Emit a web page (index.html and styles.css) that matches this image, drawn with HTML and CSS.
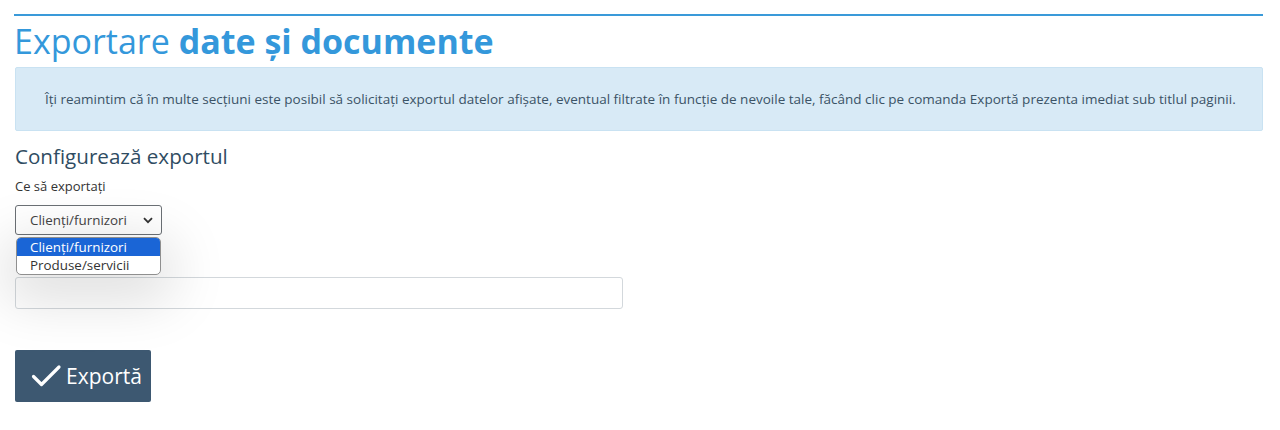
FILE: index.html
```html
<!DOCTYPE html>
<html lang="ro">
<head>
    <meta charset="UTF-8">
    <meta name="viewport" content="width=device-width, initial-scale=1.0">
    <title>Exportare date și documente</title>
    <link rel="stylesheet" href="styles.css">
</head>
<body>
    <main class="page">
        <h1 class="page-title">Exportare <strong>date și documente</strong></h1>

        <div class="info-box">
            Îți reamintim că în multe secțiuni este posibil să solicitați exportul datelor afișate, eventual filtrate în funcție de nevoile tale, făcând clic pe comanda Exportă prezenta imediat sub titlul paginii.
        </div>

        <section class="export-config">
            <h2>Configurează exportul</h2>
            <form id="exportForm">
                <div class="form-group">
                    <label for="exportType">Ce să exportați</label>
                    <div class="select-wrap">
                        <div class="select-box" id="exportType">
                            <span>Clienți/furnizori</span>
                            <svg class="chevron" width="10" height="7" viewBox="0 0 10 7">
                                <path d="M1 1.2 L5 5.2 L9 1.2" fill="none" stroke="#333" stroke-width="1.8"/>
                            </svg>
                        </div>
                        <ul class="select-options">
                            <li class="selected">Clienți/furnizori</li>
                            <li>Produse/servicii</li>
                        </ul>
                    </div>
                </div>
                <div class="form-group spaced">
                    <input type="text" class="text-input" name="exportDetails">
                </div>
                <button type="submit" class="btn-export">
                    <svg width="31" height="24" viewBox="0 0 31 24">
                        <path d="M2.5 12.5 L10.5 20.5 L28 3" fill="none" stroke="#fff" stroke-width="3.2" stroke-linecap="round" stroke-linejoin="round"/>
                    </svg>
                    Exportă
                </button>
            </form>
        </section>
    </main>
</body>
</html>
```

FILE: styles.css
```css
body {
    font-family: "Open Sans", "Noto Sans", sans-serif;
    margin: 0;
    padding: 0;
    background-color: #fff;
    color: #333;
}

.page {
    width: 1249px;
    margin: 0 0 0 14px;
    padding-top: 14px;
}

.page-title {
    border-top: 2px solid #3a9ad9;
    margin: 0;
    padding-top: 2px;
    font-size: 34px;
    font-weight: 400;
    line-height: 46px;
    color: #3498db;
}

.page-title strong {
    font-weight: 700;
}

.info-box {
    margin: 3px 0 0 1px;
    padding: 23px 26px 23px 29px;
    background-color: #d8eaf6;
    border: 1px solid #c9e2f2;
    border-radius: 2px;
    font-size: 13.5px;
    line-height: 16px;
    color: #3b5366;
}

.export-config {
    padding-left: 1px;
}

.export-config h2 {
    margin: 12px 0 0;
    font-size: 20.6px;
    font-weight: 400;
    line-height: 26px;
    color: #2f4c62;
}

.form-group label {
    display: block;
    font-size: 13px;
    line-height: 18px;
    margin-top: 8px;
    color: #333;
}

.select-wrap {
    position: relative;
    margin-top: 10px;
    width: 147px;
}

.select-box {
    display: flex;
    align-items: center;
    justify-content: space-between;
    height: 30px;
    box-sizing: border-box;
    padding: 0 8px 0 14px;
    border: 1px solid #6b7075;
    border-radius: 3px;
    font-size: 13.4px;
    color: #444;
}

.select-options {
    position: absolute;
    top: 32px;
    left: 1px;
    width: 145px;
    box-sizing: border-box;
    margin: 0;
    padding: 0;
    list-style: none;
    background: #fff;
    border: 1px solid #8f8f8f;
    border-radius: 5px;
    overflow: hidden;
    box-shadow: 0 14px 55px 12px rgba(0, 0, 0, 0.13);
    font-size: 13.4px;
    line-height: 18px;
    z-index: 2;
}

.select-options li {
    padding: 0 13px;
    color: #333;
}

.select-options li.selected {
    background: #1a65d6;
    color: #fff;
}

.spaced {
    margin-top: 42px;
}

.text-input {
    display: block;
    width: 608px;
    height: 32px;
    box-sizing: border-box;
    border: 1px solid #d3d8dc;
    border-radius: 3px;
    background: #fff;
}

.btn-export {
    display: flex;
    align-items: center;
    gap: 4px;
    margin-top: 41px;
    width: 136px;
    height: 52px;
    padding: 0 0 0 16px;
    border: none;
    border-radius: 2px;
    background-color: #3d5871;
    color: #fff;
    font-family: "Open Sans", sans-serif;
    font-size: 21px;
}
```
